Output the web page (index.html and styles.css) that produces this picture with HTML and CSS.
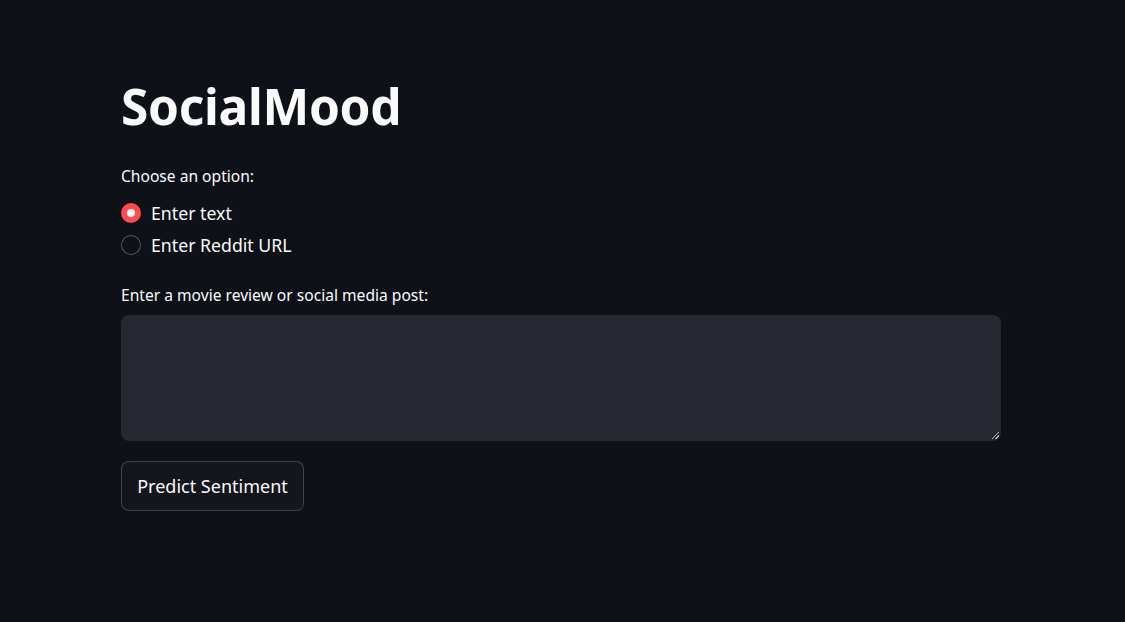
FILE: index.html
```html
<!DOCTYPE html>
<html lang="en">
<head>
<meta charset="utf-8">
<title>SocialMood</title>
<link rel="stylesheet" href="styles.css">
</head>
<body>
<main class="app">
  <h1 class="title">SocialMood</h1>
  <div class="field">
    <div class="label">Choose an option:</div>
    <div class="radios">
      <label class="radio checked"><span class="dot"></span><span class="radio-text">Enter text</span></label>
      <label class="radio"><span class="dot"></span><span class="radio-text">Enter Reddit URL</span></label>
    </div>
  </div>
  <div class="field area-field">
    <div class="label">Enter a movie review or social media post:</div>
    <div class="textarea"><span class="grip"></span></div>
  </div>
  <button class="btn">Predict Sentiment</button>
</main>
</body>
</html>
```

FILE: styles.css
```css
html, body {
  margin: 0;
  padding: 0;
  background: #0e1117;
  height: 100%;
}
body {
  font-family: "Noto Sans", "Open Sans", sans-serif;
  color: #fafafa;
}
.app {
  width: 880px;
  margin-left: 121px;
  padding-top: 77px;
  display: flex;
  flex-direction: column;
  align-items: flex-start;
}
.title {
  margin: 0;
  font-size: 49.6px;
  font-weight: 700;
  line-height: 59px;
  letter-spacing: -0.3px;
}
.field {
  display: flex;
  flex-direction: column;
  align-self: stretch;
}
.label {
  font-size: 15.6px;
  line-height: 22px;
  margin-top: 29px;
}
.radios {
  display: flex;
  flex-direction: column;
  gap: 10px;
  margin-top: 15px;
}
.radio {
  display: flex;
  align-items: center;
  gap: 10px;
  height: 22px;
  font-size: 17.7px;
}
.dot {
  width: 20px;
  height: 20px;
  box-sizing: border-box;
  border-radius: 50%;
  border: 1px solid rgba(250, 250, 250, 0.3);
  background: #0e1117;
}
.radio.checked .dot {
  border: 6px solid #ff4b4b;
  background: #fafafa;
}
.area-field .label {
  margin-top: 28px;
}
.textarea {
  margin-top: 9px;
  height: 126px;
  background: #262730;
  border-radius: 8px;
  position: relative;
}
.grip {
  position: absolute;
  right: 2px;
  bottom: 2px;
  width: 7px;
  height: 7px;
  background: linear-gradient(135deg, transparent 45%, #aeb0b8 45%, #aeb0b8 55%, transparent 55%, transparent 70%, #aeb0b8 70%, #aeb0b8 82%, transparent 82%);
}
.btn {
  margin-top: 20px;
  height: 50px;
  width: 183px;
  box-sizing: border-box;
  border-radius: 8px;
  border: 1px solid rgba(250, 250, 250, 0.2);
  background: #13161d;
  color: #fafafa;
  font-family: inherit;
  font-size: 18px;
  padding: 0;
}
```
